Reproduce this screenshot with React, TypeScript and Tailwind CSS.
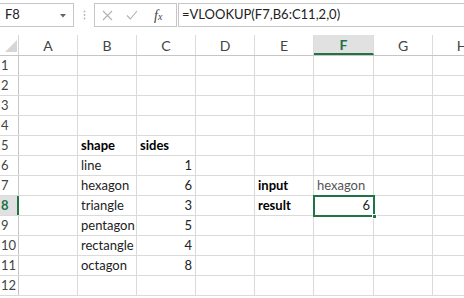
import React from 'react';

type Cell = { text: string; bold?: boolean; right?: boolean; dim?: boolean };

const COLS = ['A', 'B', 'C', 'D', 'E', 'F', 'G', 'H'];
const COL_WIDTHS = ['w-[59px]', 'w-[59px]', 'w-[59px]', 'w-[59px]', 'w-[59px]', 'w-[60px]', 'w-[59px]', 'w-[59px]'];

// sheet contents keyed by row number, then column letter
const SHEET: Record<number, Record<string, Cell>> = {
  5: { B: { text: 'shape', bold: true }, C: { text: 'sides', bold: true } },
  6: { B: { text: 'line' }, C: { text: '1', right: true } },
  7: {
    B: { text: 'hexagon' },
    C: { text: '6', right: true },
    E: { text: 'input', bold: true },
    F: { text: 'hexagon', dim: true },
  },
  8: {
    B: { text: 'triangle' },
    C: { text: '3', right: true },
    E: { text: 'result', bold: true },
    F: { text: '6', right: true },
  },
  9: { B: { text: 'pentagon' }, C: { text: '5', right: true } },
  10: { B: { text: 'rectangle' }, C: { text: '4', right: true } },
  11: { B: { text: 'octagon' }, C: { text: '8', right: true } },
};

const FormulaBar: React.FC = () => (
  <div className="flex h-[35px] items-start pt-[3px] text-[13px] text-[#222]">
    <div className="relative flex h-[24px] w-[74px] items-center border-y border-r border-[#c6c6c6] pl-[5px]">
      <span>F8</span>
      <svg className="absolute left-[60px] top-[10px]" width="6" height="4" viewBox="0 0 6 4">
        <polygon points="0,0 6,0 3,3.5" fill="#666" />
      </svg>
    </div>
    <div className="flex h-[24px] w-[20px] items-center justify-center">
      <svg width="3" height="10" viewBox="0 0 3 10">
        <circle cx="1.5" cy="1.5" r="0.9" fill="#b5b5b5" />
        <circle cx="1.5" cy="5" r="0.9" fill="#b5b5b5" />
        <circle cx="1.5" cy="8.5" r="0.9" fill="#b5b5b5" />
      </svg>
    </div>
    <div className="flex h-[24px] w-[83px] items-center border border-[#c6c6c6]">
      <svg className="ml-[7px]" width="11" height="11" viewBox="0 0 11 11">
        <path d="M1 1 L10 10 M10 1 L1 10" stroke="#b0b0b0" strokeWidth="1.1" fill="none" />
      </svg>
      <svg className="ml-[13px]" width="12" height="10" viewBox="0 0 12 10">
        <path d="M1 5.5 L4.3 9 L11 1" stroke="#b0b0b0" strokeWidth="1.1" fill="none" />
      </svg>
      <span className="ml-[16px] font-['Liberation_Serif',serif] text-[14px] italic text-[#444]">
        f<span className="text-[10px]">x</span>
      </span>
    </div>
    <div className="ml-[1px] flex h-[24px] flex-1 items-center border-y border-l border-[#c6c6c6] pl-[3px]">
      =VLOOKUP(F7,B6:C11,2,0)
    </div>
  </div>
);

const HeaderRow: React.FC = () => (
  <div className="flex h-[21px] border-b border-[#c6c6c6]">
    <div className="relative h-full w-[19px] shrink-0 border-r border-[#d4d4d4]">
      <svg className="absolute left-[5px] top-[5px]" width="12" height="12" viewBox="0 0 12 12">
        <polygon points="12,0 12,12 0,12" fill="#d6d6d6" />
      </svg>
    </div>
    {COLS.map((c, i) => {
      const active = c === 'F';
      return (
        <div
          key={c}
          className={`flex h-full shrink-0 items-center justify-center border-r border-[#dcdcdc] text-[14px] ${COL_WIDTHS[i]} ${
            active ? 'border-b-2 border-b-[#217346] bg-[#e1e1e1] font-bold text-[#217346]' : 'text-[#444]'
          }`}
        >
          {c}
        </div>
      );
    })}
  </div>
);

const SheetRow: React.FC<{ n: number }> = ({ n }) => {
  const active = n === 8;
  const data = SHEET[n] || {};
  return (
    <div className="flex h-[20px] border-b border-[#dadada]">
      <div
        className={`flex h-full w-[19px] shrink-0 items-center pl-[1px] text-[13px] ${
          active ? 'border-r-2 border-r-[#217346] bg-[#e1e1e1] font-bold text-[#217346]' : 'border-r border-[#c6c6c6] text-[#444]'
        }`}
      >
        {n}
      </div>
      {COLS.map((c, i) => {
        const cell = data[c];
        return (
          <div
            key={c}
            className={`flex h-full shrink-0 items-center overflow-visible whitespace-nowrap border-r border-[#dadada] px-[3px] ${COL_WIDTHS[i]} ${
              cell?.right ? 'justify-end' : 'justify-start'
            }`}
          >
            {cell && (
              <span className={`${cell.bold ? 'font-bold text-black' : cell.dim ? 'text-[#555]' : 'text-[#222]'}`}>
                {cell.text}
              </span>
            )}
          </div>
        );
      })}
    </div>
  );
};

export default function App() {
  const rows = Array.from({ length: 12 }, (_, i) => i + 1);
  return (
    <div className="h-[298px] w-[464px] overflow-hidden bg-white font-['Lato',sans-serif] text-[13px]">
      <FormulaBar />
      <div className="relative">
        <HeaderRow />
        {rows.map((n) => (
          <SheetRow key={n} n={n} />
        ))}
        {/* active cell F8 */}
        <div className="pointer-events-none absolute left-[313px] top-[160px] h-[22px] w-[62px] border-2 border-[#217346]">
          <div className="absolute -bottom-[4px] -right-[4px] h-[5px] w-[5px] border border-white bg-[#217346]" />
        </div>
      </div>
    </div>
  );
}
